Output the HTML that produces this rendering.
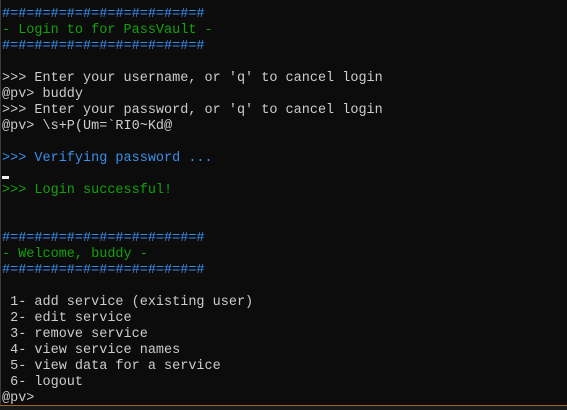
<!DOCTYPE html>
<html><head><style>
html,body{margin:0;padding:0;background:#0c0c0c;width:567px;height:410px;overflow:hidden;position:relative}
pre{margin:0;position:absolute;left:2px;top:7px;font-family:"Liberation Mono",monospace;font-size:13.5px;line-height:16px;color:#cccccc;letter-spacing:0}
.b{color:#3b8eea}.g{color:#13a10e}
#cur{position:absolute;left:2px;top:176px;width:7px;height:3px;background:#f0f0f0}
#edge{position:absolute;left:0;top:0;width:1px;height:410px;background:#3a3a3a}
#bar{position:absolute;left:0;top:405px;width:567px;height:5px;background:#1a1a1a;border-top:1px solid #a0651f}
</style></head><body>
<div id="edge"></div>
<pre><span class="b">#=#=#=#=#=#=#=#=#=#=#=#=#</span>
<span class="g">- Login to for PassVault -</span>
<span class="b">#=#=#=#=#=#=#=#=#=#=#=#=#</span>

&gt;&gt;&gt; Enter your username, or 'q' to cancel login
@pv&gt; buddy
&gt;&gt;&gt; Enter your password, or 'q' to cancel login
@pv&gt; \s+P(Um=`RI0~Kd@

<span class="b">&gt;&gt;&gt; Verifying password ...</span>

<span class="g">&gt;&gt;&gt; Login successful!</span>


<span class="b">#=#=#=#=#=#=#=#=#=#=#=#=#</span>
<span class="g">- Welcome, buddy -</span>
<span class="b">#=#=#=#=#=#=#=#=#=#=#=#=#</span>

 1- add service (existing user)
 2- edit service
 3- remove service
 4- view service names
 5- view data for a service
 6- logout
@pv&gt;</pre>
<div id="cur"></div>
<div id="bar"></div>
</body></html>
